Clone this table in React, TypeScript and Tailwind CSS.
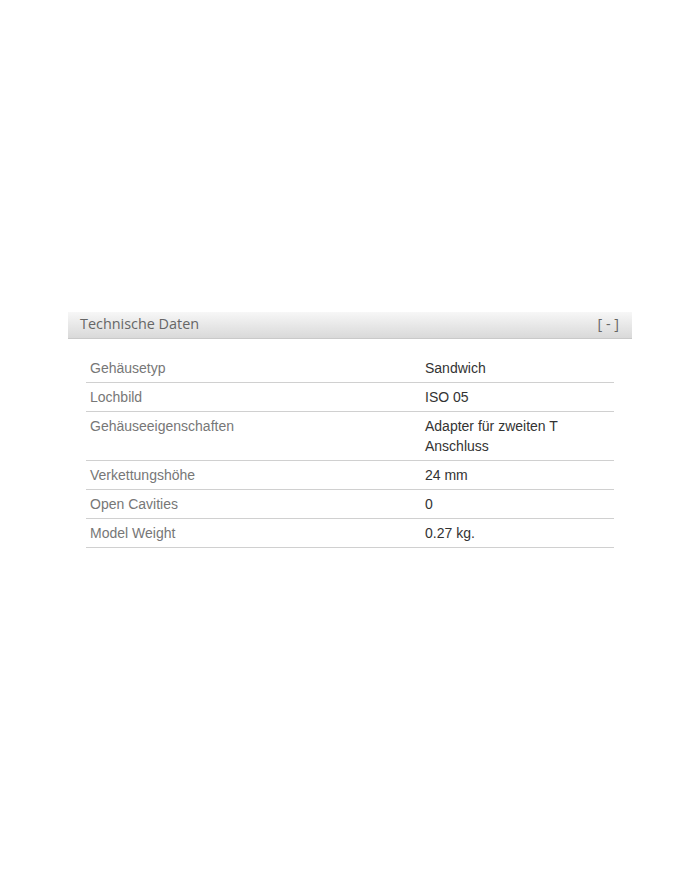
const rows: [string, string][] = [
  ['Gehäusetyp', 'Sandwich'],
  ['Lochbild', 'ISO 05'],
  ['Gehäuseeigenschaften', 'Adapter für zweiten T Anschluss'],
  ['Verkettungshöhe', '24 mm'],
  ['Open Cavities', '0'],
  ['Model Weight', '0.27 kg.'],
];

export default function App() {
  return (
    <div className="min-h-[869px] bg-white pt-[312px] px-[68px]">
      <div className="flex h-[27px] items-center justify-between border-b border-[#c9c9c9] bg-gradient-to-b from-[#f7f7f7] to-[#d9d9d9] pb-[2px] pl-3 pr-[13px] font-['Open_Sans',sans-serif] text-[14.4px] text-[#666]">
        <span>Technische Daten</span>
        <span>[ - ]</span>
      </div>
      <div className="px-[18px] pt-[15px]">
        <table className="w-full border-collapse font-['Liberation_Sans',Arial,sans-serif] text-sm leading-5">
          <tbody>
            {rows.map(([label, value]) => (
              <tr key={label} className="border-b border-[#d0d0d0]">
                <td className="w-[335px] px-1 py-1 align-top text-[#777]">{label}</td>
                <td className="px-1 py-1 align-top text-[#333]">{value}</td>
              </tr>
            ))}
          </tbody>
        </table>
      </div>
    </div>
  );
}
